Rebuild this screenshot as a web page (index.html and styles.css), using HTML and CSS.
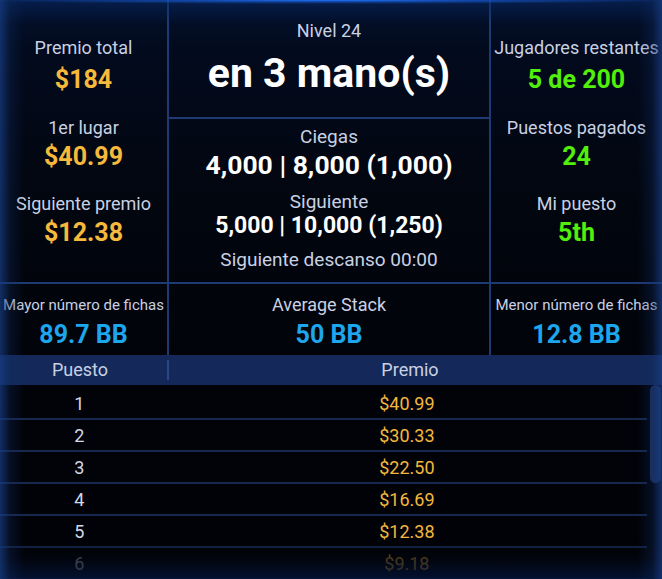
FILE: index.html
```html
<!DOCTYPE html>
<html>
	<head>
		<meta charset="UTF-8">
		<title>Torneo</title>
		<link rel="stylesheet" href="styles.css">
	</head>
	<body>

		<div class="board">

			<div class="summary">
				<div class="side">
					<div class="stat"><div class="label">Premio total</div><div class="value gold">$184</div></div>
					<div class="stat"><div class="label">1er lugar</div><div class="value gold">$40.99</div></div>
					<div class="stat"><div class="label">Siguiente premio</div><div class="value gold">$12.38</div></div>
				</div>

				<div class="level">
					<div class="level_head">
						<div class="label">Nivel 24</div>
						<div class="countdown">en 3 mano(s)</div>
					</div>
					<div class="blinds">
						<div class="label big">Ciegas</div>
						<div class="blinds_now">4,000 | 8,000 (1,000)</div>
						<div class="label big next_label">Siguiente</div>
						<div class="blinds_next">5,000 | 10,000 (1,250)</div>
						<div class="label big break_label">Siguiente descanso 00:00</div>
					</div>
				</div>

				<div class="side">
					<div class="stat"><div class="label">Jugadores restantes</div><div class="value green">5 de 200</div></div>
					<div class="stat"><div class="label">Puestos pagados</div><div class="value green">24</div></div>
					<div class="stat"><div class="label">Mi puesto</div><div class="value green">5th</div></div>
				</div>
			</div>

			<div class="stacks">
				<div class="stack_cell"><div class="label small">Mayor número de fichas</div><div class="value blue">89.7 BB</div></div>
				<div class="stack_cell"><div class="label">Average Stack</div><div class="value blue">50 BB</div></div>
				<div class="stack_cell"><div class="label small">Menor número de fichas</div><div class="value blue">12.8 BB</div></div>
			</div>

			<div class="payouts">
				<div class="payouts_head">
					<div class="col_pos">Puesto</div>
					<div class="col_prize">Premio</div>
				</div>
				<div class="payouts_body">
					<div class="row"><div class="col_pos">1</div><div class="col_prize">$40.99</div></div>
					<div class="row"><div class="col_pos">2</div><div class="col_prize">$30.33</div></div>
					<div class="row"><div class="col_pos">3</div><div class="col_prize">$22.50</div></div>
					<div class="row"><div class="col_pos">4</div><div class="col_prize">$16.69</div></div>
					<div class="row"><div class="col_pos">5</div><div class="col_prize">$12.38</div></div>
					<div class="row"><div class="col_pos">6</div><div class="col_prize">$9.18</div></div>
					<div class="scrollbar"></div>
				</div>
			</div>

		</div>

	</body>
</html>
```

FILE: styles.css
```css
*{padding: 0;margin: 0;box-sizing: border-box;}

body{background: #000;}

.board{width: 662px;height: 579px;overflow: hidden;position: relative;font-family: Roboto, "Liberation Sans", sans-serif;color: #c9d1e3;
	background: linear-gradient(#03112e 0, #020a1d 50px, #02060f 200px, #010309 360px, #010207 100%);}

/* glow along the top edge */
.board::before{content: "";position: absolute;left: 0;top: 0;right: 0;height: 24px;pointer-events: none;
	background: radial-gradient(ellipse 360px 4px at 50% 0, #2277ff 0, rgba(26,100,230,0.6) 40%, rgba(10,50,140,0) 100%),
		linear-gradient(rgba(8,40,100,0.55), rgba(8,40,100,0));}

/* side glow and the fade at the bottom of the list */
.board::after{content: "";position: absolute;left: 0;top: 0;right: 0;bottom: 0;pointer-events: none;
	background: linear-gradient(to right, rgba(22,60,130,0.75) 0, rgba(16,45,100,0.3) 10px, rgba(10,30,70,0) 24px),
		linear-gradient(to left, rgba(22,60,130,0.75) 0, rgba(16,45,100,0.3) 10px, rgba(10,30,70,0) 24px),
		linear-gradient(rgba(2,4,10,0) 542px, rgba(2,5,14,0.72) 558px, rgba(3,20,55,0.85) 579px);}

.label{font-size: 18px;line-height: 20px;color: #c9d1e3;text-align: center;white-space: nowrap;}
.label.small{font-size: 15px;line-height: 18px;}
.label.big{font-size: 19px;line-height: 22px;}
.value{font-size: 25px;line-height: 28px;font-weight: bold;text-align: center;white-space: nowrap;}
.gold{color: #f6b93b;}
.green{color: #52ee0c;}
.blue{color: #1da6ee;}

/* top block: prizes | level and blinds | players */
.summary{display: grid;grid-template-columns: 169px 322px 1fr;height: 284px;border-bottom: 2px solid #1d3a72;}
.summary>div{border-right: 2px solid #1d3a72;}
.summary>div:last-child{border-right: none;}

.side{display: flex;flex-direction: column;padding-top: 38px;}
.stat .value{margin-top: 5px;}
.stat:first-child .value{margin-top: 8px;}
.stat:nth-child(2){margin-top: 24px;}
.stat:nth-child(3){margin-top: 23px;}

.level{display: flex;flex-direction: column;}
.level_head{height: 119px;border-bottom: 2px solid #1d3a72;padding-top: 21px;}
.countdown{font-size: 41px;line-height: 44px;font-weight: bold;color: #fff;text-align: center;margin-top: 10px;}

.blinds{padding-top: 7px;}
.blinds_now{font-size: 26.5px;line-height: 30px;font-weight: bold;color: #fff;text-align: center;margin-top: 2px;}
.next_label{margin-top: 11px;}
.blinds_next{font-size: 23px;line-height: 24px;font-weight: bold;color: #fff;text-align: center;margin-top: 1px;}
.break_label{margin-top: 11px;}

/* average stacks */
.stacks{display: grid;grid-template-columns: 169px 322px 1fr;height: 71px;}
.stack_cell{border-right: 2px solid #1d3a72;padding-top: 12px;}
.stack_cell:last-child{border-right: none;}
.stack_cell .value{margin-top: 7px;}
.stack_cell .label:not(.small){margin-top: -1px;margin-bottom: -1px;}

/* payout list */
.payouts_head{display: flex;height: 30px;background: #14295a;align-items: center;font-size: 18px;color: #c9d1e3;}
.col_pos{width: 160px;text-align: center;}
.col_prize{width: 484px;margin-left: 8px;text-align: center;}
.payouts_head .col_prize{border-left: 2px solid #2a4786;margin-left: 7px;line-height: 20px;}
.payouts_head .col_pos{line-height: 20px;}

.payouts_body{position: relative;padding-top: 3px;padding-right: 15px;}
.row{display: flex;align-items: center;height: 32px;padding-top: 2px;border-bottom: 2px solid #17284e;font-size: 18px;line-height: 20px;}
.row .col_pos{color: #d2d9e8;}
.row .col_prize{color: #f3b73d;}

.scrollbar{position: absolute;right: 1px;top: 0;width: 11px;height: 98px;border-radius: 6px;background: #1b305f;}
```
